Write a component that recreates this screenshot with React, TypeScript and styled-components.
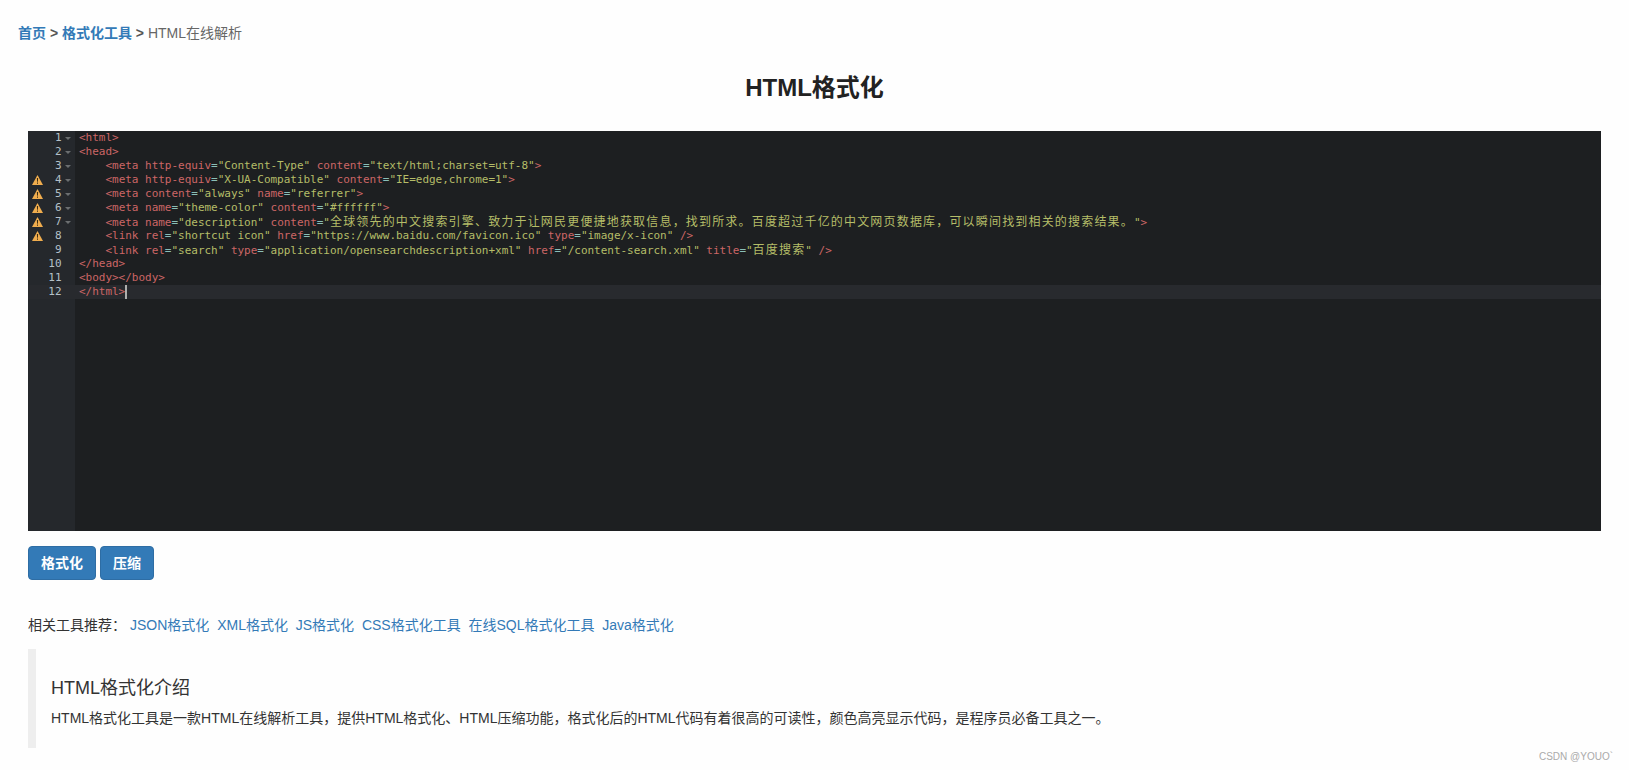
import styled, { createGlobalStyle } from "styled-components";

const GlobalStyle = createGlobalStyle`
  html, body {
    margin: 0;
    padding: 0;
    background: #fefefe;
  }
  body {
    font-family: "Liberation Sans", "Noto Sans CJK SC", sans-serif;
    font-size: 14px;
    line-height: 20px;
    color: #333;
  }
`;

const Page = styled.div`
  position: relative;
  height: 770px;
  padding: 23px 28px 0;
  box-sizing: border-box;
  overflow: hidden;
`;

const Crumbs = styled.div`
  margin-left: -10px;
  height: 20px;
  font-weight: bold;
  color: #555;
  a {
    color: #337ab7;
    text-decoration: none;
  }
  span {
    font-weight: normal;
    color: #666;
  }
`;

const Title = styled.h2`
  margin: 27px 0 25px;
  height: 36px;
  font-size: 24px;
  line-height: 36px;
  font-weight: bold;
  text-align: center;
  color: #222;
`;

const Editor = styled.div`
  display: flex;
  height: 400px;
  background: #1d1f21;
  font-family: "DejaVu Sans Mono", "Noto Sans CJK SC", monospace;
  font-size: 11px;
  line-height: 14px;
  letter-spacing: -0.02px;
  overflow: hidden;
`;

const Gutter = styled.div`
  flex: none;
  width: 47px;
  background: #25282c;
  color: #b4c0c8;
`;

const GutterCell = styled.div`
  position: relative;
  height: 14px;
  padding-right: 13.5px;
  text-align: right;
  background: ${(p: { $active?: boolean }) => (p.$active ? "#282a2e" : "transparent")};
`;

const WarnIcon = styled.svg`
  position: absolute;
  left: 4px;
  top: 2px;
  width: 11px;
  height: 10px;
`;

const FoldArrow = styled.i`
  position: absolute;
  right: 4px;
  top: 6px;
  width: 0;
  height: 0;
  border-left: 3px solid transparent;
  border-right: 3px solid transparent;
  border-top: 3px solid #6b6e70;
`;

const Code = styled.div`
  flex: 1;
  min-width: 0;
`;

const CodeLine = styled.div<{ $active?: boolean }>`
  height: 14px;
  padding-left: 4px;
  white-space: pre;
  color: #c5c8c6;
  background: ${(p) => (p.$active ? "#282a2e" : "transparent")};
`;

const colors: Record<string, string> = {
  t: "#cc6666",
  a: "#cc6666",
  o: "#8abeb7",
  s: "#b5bd68",
  x: "#c5c8c6",
};

const Tok = styled.span<{ $kind: string }>`
  color: ${(p) => colors[p.$kind]};
`;

const Cjk = styled.span`
  font-size: 12px;
  letter-spacing: 1.18px;
`;

const Caret = styled.i`
  display: inline-block;
  width: 2px;
  height: 14px;
  margin-right: -2px;
  vertical-align: top;
  background: #aeafad;
`;

const Actions = styled.div`
  display: flex;
  gap: 4px;
  margin-top: 15px;
`;

const Btn = styled.button`
  height: 34px;
  padding: 6px 12px;
  box-sizing: border-box;
  border: 1px solid #2e6da4;
  border-radius: 4px;
  background: #337ab7;
  color: #fff;
  font: bold 14px/20px "Liberation Sans", "Noto Sans CJK SC", sans-serif;
`;

const Related = styled.div`
  display: flex;
  margin-top: 35px;
  height: 20px;
  a {
    margin-right: 7.8px;
    color: #337ab7;
    text-decoration: none;
  }
`;

const RelatedLabel = styled.span`
  width: 102px;
`;

const Intro = styled.blockquote`
  margin: 14px 0 0;
  padding: 26px 15px 0;
  height: 99px;
  box-sizing: border-box;
  border-left: 8px solid #eee;
  h4 {
    margin: 0 0 7px;
    font-size: 18px;
    line-height: 26px;
    font-weight: normal;
  }
  p {
    margin: 0;
  }
`;

const Watermark = styled.div`
  position: absolute;
  right: 16px;
  bottom: 6px;
  font-size: 10px;
  line-height: 14px;
  color: #aaa;
`;

type Token = [string, string];

const tag = (name: string, attrs: [string, string][], close: string): Token[] => {
  const out: Token[] = [["t", "<" + name]];
  attrs.forEach(([k, v]) => {
    out.push(["x", " "], ["a", k], ["o", "="], ["s", `"${v}"`]);
  });
  out.push(["t", close]);
  return out;
};

const indent: Token = ["x", "    "];

const lines: Token[][] = [
  [["t", "<html>"]],
  [["t", "<head>"]],
  [indent, ...tag("meta", [["http-equiv", "Content-Type"], ["content", "text/html;charset=utf-8"]], ">")],
  [indent, ...tag("meta", [["http-equiv", "X-UA-Compatible"], ["content", "IE=edge,chrome=1"]], ">")],
  [indent, ...tag("meta", [["content", "always"], ["name", "referrer"]], ">")],
  [indent, ...tag("meta", [["name", "theme-color"], ["content", "#ffffff"]], ">")],
  [
    indent,
    ...tag(
      "meta",
      [
        ["name", "description"],
        ["content", "全球领先的中文搜索引擎、致力于让网民更便捷地获取信息，找到所求。百度超过千亿的中文网页数据库，可以瞬间找到相关的搜索结果。"],
      ],
      ">",
    ),
  ],
  [indent, ...tag("link", [["rel", "shortcut icon"], ["href", "https://www.baidu.com/favicon.ico"], ["type", "image/x-icon"]], " />")],
  [
    indent,
    ...tag(
      "link",
      [
        ["rel", "search"],
        ["type", "application/opensearchdescription+xml"],
        ["href", "/content-search.xml"],
        ["title", "百度搜索"],
      ],
      " />",
    ),
  ],
  [["t", "</head>"]],
  [["t", "<body></body>"]],
  [["t", "</html>"]],
];

const warned = [4, 5, 6, 7, 8];
const folds = [1, 2, 3, 4, 5, 6, 7];

const related = ["JSON格式化", "XML格式化", "JS格式化", "CSS格式化工具", "在线SQL格式化工具", "Java格式化"];

// ace gives wide characters two cells, so they get their own span
function renderText(text: string) {
  return text.split(/([\u3000-\u303f\u4e00-\u9fff\uff00-\uffef]+)/).map((part, i) =>
    i % 2 === 1 ? <Cjk key={i}>{part}</Cjk> : part,
  );
}

export default function App() {
  return (
    <Page>
      <GlobalStyle />
      <Crumbs>
        <a href="#">首页</a> &gt; <a href="#">格式化工具</a> &gt; <span>HTML在线解析</span>
      </Crumbs>
      <Title>HTML格式化</Title>
      <Editor>
        <Gutter>
          {lines.map((_, i) => {
            const n = i + 1;
            return (
              <GutterCell key={n} $active={n === 12}>
                {warned.includes(n) && (
                  <WarnIcon viewBox="0 0 11 10">
                    <path d="M5.5 0 L11 10 H0 Z" fill="#f0ad4e" />
                    <path d="M4.9 3 H6.1 L5.9 6.8 H5.1 Z M5 7.6 H6 V8.7 H5 Z" fill="#3a2a10" />
                  </WarnIcon>
                )}
                {n}
                {folds.includes(n) && <FoldArrow />}
              </GutterCell>
            );
          })}
        </Gutter>
        <Code>
          {lines.map((tokens, i) => (
            <CodeLine key={i} $active={i === 11}>
              {tokens.map(([kind, text], j) => (
                <Tok key={j} $kind={kind}>
                  {renderText(text)}
                </Tok>
              ))}
              {i === 11 && <Caret />}
            </CodeLine>
          ))}
        </Code>
      </Editor>
      <Actions>
        <Btn>格式化</Btn>
        <Btn>压缩</Btn>
      </Actions>
      <Related>
        <RelatedLabel>相关工具推荐：</RelatedLabel>
        {related.map((name) => (
          <a key={name} href="#">
            {name}
          </a>
        ))}
      </Related>
      <Intro>
        <h4>HTML格式化介绍</h4>
        <p>HTML格式化工具是一款HTML在线解析工具，提供HTML格式化、HTML压缩功能，格式化后的HTML代码有着很高的可读性，颜色高亮显示代码，是程序员必备工具之一。</p>
      </Intro>
      <Watermark>CSDN @YOUO`</Watermark>
    </Page>
  );
}
